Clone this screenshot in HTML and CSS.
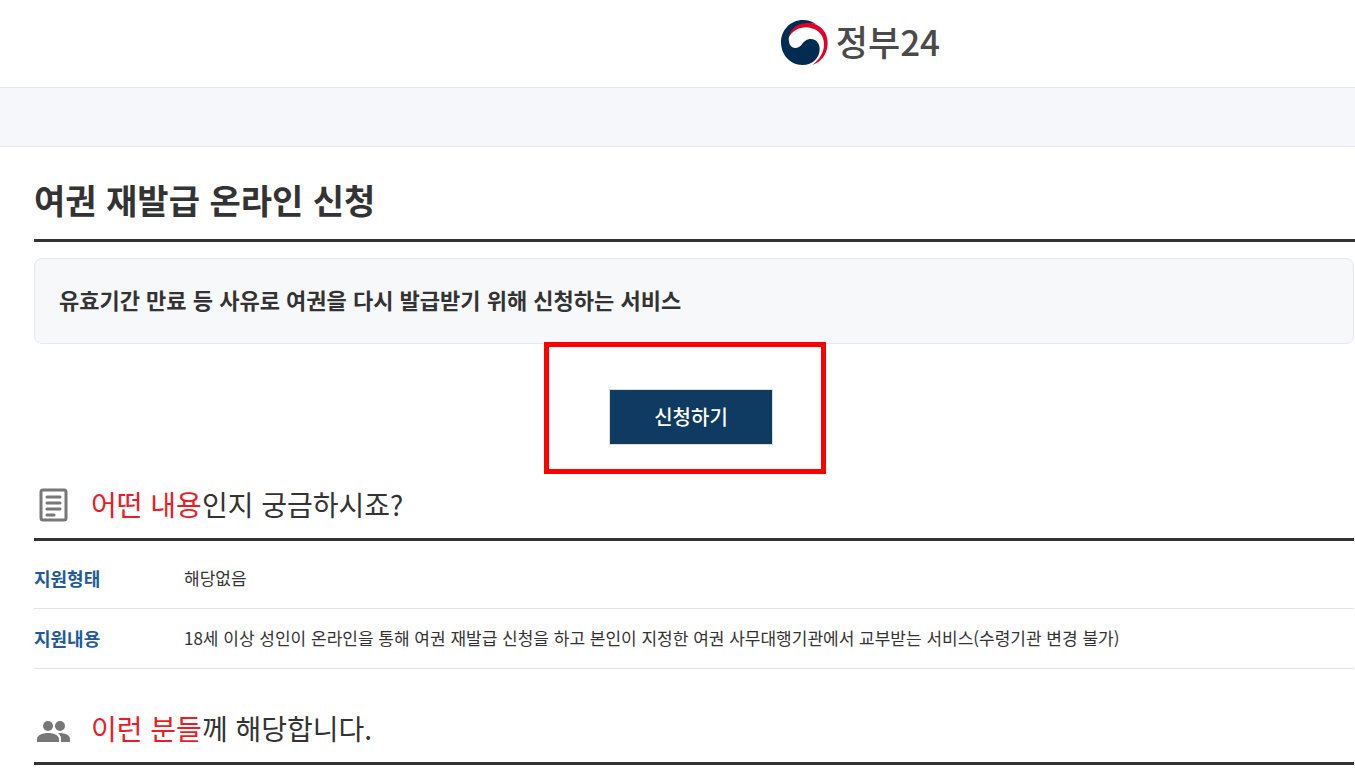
FILE: index.html
```
<!DOCTYPE html>
<html lang="ko">
<head>
    <meta charset="UTF-8">
    <meta name="viewport" content="width=device-width, initial-scale=1.0">
    <title>여권 재발급 온라인 신청 | 정부24</title>
    <link rel="stylesheet" href="styles.css">
</head>
<body>
    <header class="header">
        <a href="#" class="logo">
            <svg class="logo-mark" viewBox="0 0 141 135" aria-hidden="true">
                <path fill="#e4002b" d="M22 54C25 26 49 9 78 8C113 8 140 32 140 68C140 100 122 125 94 135C117 117 129 97 129 72C129 43 106 23 76 22C52 22 34 33 22 54Z"/>
                <path fill="#002c51" d="M108 14C96 5 82 0 66 0C29 0 0 30 0 67C0 105 28 135 64 135C96 135 116 113 116 87C116 69 104 57 90 57C77 57 70 64 64 71C57 80 51 84 43 84C32 84 25 76 24 64C23 58 23 52 25 46C31 24 50 11 78 9C90 8 100 10 108 14Z"/>
            </svg>
            <span class="logo-text">정부24</span>
        </a>
    </header>
    <div class="nav-band"></div>

    <main class="content">
        <h1 class="page-title">여권 재발급 온라인 신청</h1>

        <div class="inner">
            <p class="summary">유효기간 만료 등 사유로 여권을 다시 발급받기 위해 신청하는 서비스</p>

            <div class="apply-row">
                <div class="highlight">
                    <button type="button" class="apply-btn">신청하기</button>
                </div>
            </div>

            <section class="section">
                <h2 class="section-title">
                    <svg class="icon" viewBox="0 0 40 40" aria-hidden="true">
                        <rect x="7" y="6" width="25" height="30" rx="2" fill="none" stroke="#777" stroke-width="3"/>
                        <path d="M13 13h13M13 19h13M13 25h13M13 31h7" stroke="#777" stroke-width="3" stroke-linecap="round"/>
                    </svg>
                    <span><em>어떤 내용</em>인지 궁금하시죠?</span>
                </h2>
                <table class="info">
                    <tr>
                        <th scope="row">지원형태</th>
                        <td>해당없음</td>
                    </tr>
                    <tr>
                        <th scope="row">지원내용</th>
                        <td>18세 이상 성인이 온라인을 통해 여권 재발급 신청을 하고 본인이 지정한 여권 사무대행기관에서 교부받는 서비스(수령기관 변경 불가)</td>
                    </tr>
                </table>
            </section>

            <section class="section">
                <h2 class="section-title">
                    <svg class="icon" viewBox="0 0 40 40" aria-hidden="true">
                        <g fill="#777">
                            <circle cx="14" cy="18" r="5"/>
                            <circle cx="26" cy="18" r="5"/>
                            <path d="M3 34v-3c0-4 6-6 11-6s11 2 11 6v3z"/>
                            <path d="M25 25c6 0 11 2 11 6v3h-9v-3c0-3-1-4-3-6z"/>
                        </g>
                    </svg>
                    <span><em>이런 분들</em>께 해당합니다.</span>
                </h2>
            </section>
        </div>
    </main>
</body>
</html>
```
FILE: styles.css
```
* {
    box-sizing: border-box;
}
body {
    margin: 0;
    font-family: "Noto Sans CJK KR", "Noto Sans", sans-serif;
    color: #333;
    background: #fff;
}
.header {
    display: flex;
    justify-content: center;
    align-items: flex-start;
    height: 88px;
    padding: 16px 0 0 27%;
    border-bottom: 1px solid #e5e7ed;
}
.logo {
    display: flex;
    align-items: flex-end;
    gap: 8px;
    color: #4a4a4a;
    text-decoration: none;
}
.logo-mark {
    width: 47px;
    height: 45px;
}
.logo-text {
    font-size: 35px;
    font-weight: 500;
    line-height: 49px;
}
.nav-band {
    height: 59px;
    background: #f6f7fb;
    border-bottom: 1px solid #e5e7ed;
}
.content {
    padding-left: 34px;
}
.page-title {
    margin: 0 0 16px;
    padding: 28px 0 14px;
    font-size: 34px;
    font-weight: 700;
    line-height: 50px;
    border-bottom: 3px solid #333;
}
.inner {
    padding-right: 1px;
}
.summary {
    margin: 0;
    padding: 24px 24px 28px;
    font-size: 22px;
    font-weight: 700;
    line-height: 32px;
    background: #f7f8fa;
    border: 1px solid #e5e7ed;
    border-radius: 8px;
}
/* the frame overlaps the bottom edge of the summary box */
.apply-row {
    display: flex;
    justify-content: center;
    margin-top: -2px;
    padding-right: 18px;
}
.highlight {
    padding: 42px 48px 24px 60px;
    border: 5px solid #f00;
}
.apply-btn {
    display: block;
    width: 164px;
    height: 56px;
    padding: 0 0 2px;
    border: 1px solid #ddd;
    background: #0f3a62;
    color: #fff;
    font-family: inherit;
    font-size: 20px;
    font-weight: 500;
    cursor: pointer;
}
.section {
    margin-bottom: 29px;
}
.section-title {
    display: flex;
    align-items: center;
    gap: 17px;
    margin: 0;
    padding: 8px 0 12px;
    font-size: 28px;
    font-weight: 400;
    line-height: 44px;
    border-bottom: 3px solid #333;
}
.section-title em {
    font-style: normal;
    color: #ed1c24;
}
.icon {
    width: 40px;
    height: 40px;
}
.info {
    width: 100%;
    margin-top: 8px;
    border-collapse: collapse;
    font-size: 17px;
    line-height: 28px;
}
.info th,
.info td {
    padding: 15px 0 16px;
    text-align: left;
    border-bottom: 1px solid #e3e3e3;
}
.info th {
    width: 150px;
    font-size: 18px;
    font-weight: 700;
    color: #1f5a9b;
}
```
